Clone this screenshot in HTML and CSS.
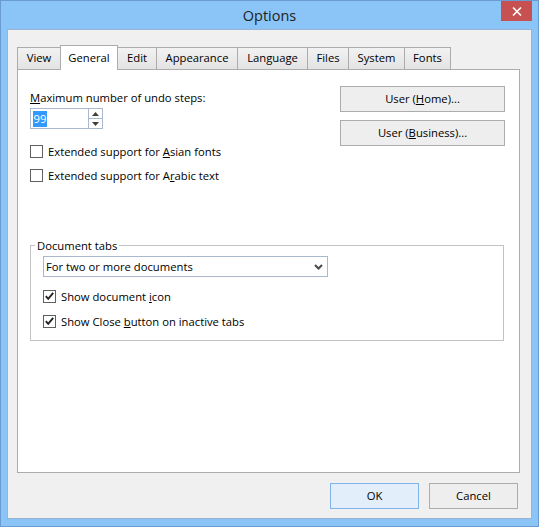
FILE: index.html
```html
<!DOCTYPE html>
<html>
<head>
<meta charset="utf-8">
<title>Options</title>
<link rel="stylesheet" href="styles.css">
</head>
<body>
<div class="window">
  <div class="titlebar">
    <span class="title">Options</span>
    <div class="close">
      <svg width="10" height="9" viewBox="0 0 10 9"><path d="M1 0.5 L9 8.5 M9 0.5 L1 8.5" stroke="#fff" stroke-width="1.6" fill="none"/></svg>
    </div>
  </div>
  <div class="client">
    <div class="tabs">
      <div class="tab t-view">View</div>
      <div class="tab t-general active">General</div>
      <div class="tab t-edit">Edit</div>
      <div class="tab t-appearance">Appearance</div>
      <div class="tab t-language">Language</div>
      <div class="tab t-files">Files</div>
      <div class="tab t-system">System</div>
      <div class="tab t-fonts">Fonts</div>
    </div>
    <div class="panel">
      <div class="top-row">
        <div class="left-col">
          <div class="label"><u>M</u>aximum number of undo steps:</div>
          <div class="spin">
            <div class="spin-text"><span class="sel">99</span></div>
            <div class="spin-btns">
              <div class="spin-btn"><svg width="7" height="4" viewBox="0 0 7 4"><path d="M0 4 L3.5 0 L7 4 Z" fill="#404040"/></svg></div>
              <div class="spin-btn lower"><svg width="7" height="4" viewBox="0 0 7 4"><path d="M0 0 L3.5 4 L7 0 Z" fill="#404040"/></svg></div>
            </div>
          </div>
          <div class="check first"><span class="box"></span><span>Extended support for <u>A</u>sian fonts</span></div>
          <div class="check second"><span class="box"></span><span>Extended support for A<u>r</u>abic text</span></div>
        </div>
        <div class="right-col">
          <div class="btn wide">User (<u>H</u>ome)...</div>
          <div class="btn wide">User (<u>B</u>usiness)...</div>
        </div>
      </div>
      <fieldset class="group">
        <legend>Document tabs</legend>
        <div class="combo">
          <span>For two or more documents</span>
          <svg width="9" height="6" viewBox="0 0 9 6"><path d="M1 1 L4.5 4.5 L8 1" stroke="#4a4a4a" stroke-width="2" fill="none"/></svg>
        </div>
        <div class="check g1"><span class="box"><svg width="11" height="11" viewBox="0 0 11 11"><path d="M1.8 5.2 L4.2 7.8 L9.2 1.8" stroke="#222" stroke-width="1.9" fill="none"/></svg></span><span>Show document <u>i</u>con</span></div>
        <div class="check g2"><span class="box"><svg width="11" height="11" viewBox="0 0 11 11"><path d="M1.8 5.2 L4.2 7.8 L9.2 1.8" stroke="#222" stroke-width="1.9" fill="none"/></svg></span><span>Show Close <u>b</u>utton on inactive tabs</span></div>
      </fieldset>
    </div>
    <div class="footer">
      <div class="btn dlg default">OK</div>
      <div class="btn dlg">Cancel</div>
    </div>
  </div>
</div>
</body>
</html>
```
FILE: styles.css
```css
* { box-sizing: border-box; }
html, body { margin: 0; padding: 0; }
body {
  font-family: "Open Sans", "Noto Sans", sans-serif;
  font-size: 11.25px;
  line-height: 15px;
  color: #000;
  background: #fff;
}
u { text-decoration: underline; text-underline-offset: 1px; }

.window {
  width: 539px;
  height: 527px;
  border: 1px solid #6a9bd2;
  background: #8bc5f7;
  padding: 0 6px 7px 6px;
  display: flex;
  flex-direction: column;
}

.titlebar {
  height: 28px;
  display: grid;
  grid-template-columns: 1fr auto 1fr;
  margin: 0 -6px;
}
.title {
  grid-column: 2;
  font-size: 14.5px;
  line-height: 28px;
  color: #222;
  padding-top: 1px;
}
.close {
  grid-column: 3;
  justify-self: end;
  align-self: start;
  width: 31px;
  height: 20px;
  margin-right: 6px;
  background: #c75050;
  display: flex;
  align-items: center;
  justify-content: center;
}

.client {
  flex: 1;
  border: 1px solid #98b4d2;
  background: #f0f0f0;
  padding: 15px 11px 0 9px;
  display: flex;
  flex-direction: column;
}

.tabs {
  display: flex;
  align-items: flex-end;
  height: 24px;
}
.tab {
  height: 22px;
  padding: 2px 0 0 0;
  text-align: center;
  border: 1px solid #acacac;
  border-bottom: none;
  margin-right: -1px;
  background: linear-gradient(#f2f2f2, #e3e3e3);
  white-space: nowrap;
  flex: none;
}
.t-view { width: 44px; }
.t-general { width: 58px; }
.t-edit { width: 40px; }
.t-appearance { width: 82px; }
.t-language { width: 71px; }
.t-files { width: 42px; }
.t-system { width: 57px; }
.t-fonts { width: 47px; }
.tab.active {
  height: 25px;
  padding-top: 4px;
  margin-bottom: -1px;
  background: #fff;
  position: relative;
  z-index: 1;
}

.panel {
  height: 404px;
  border: 1px solid #acacac;
  background: #fff;
  padding: 16px 14px 0 12px;
}
.top-row {
  display: flex;
  justify-content: space-between;
  align-items: flex-start;
}
.left-col { padding-top: 4px; }
.right-col {
  display: flex;
  flex-direction: column;
  gap: 8px;
}

.spin {
  margin-top: 3px;
  width: 73px;
  height: 21px;
  border: 1px solid #a9b8cf;
  display: flex;
}
.spin-text {
  flex: 1;
  padding-left: 2px;
  display: flex;
  align-items: center;
}
.sel {
  background: #3399ff;
  color: #fff;
  line-height: 16px;
  display: inline-block;
  padding: 0 0.5px;
}
.spin-btns {
  width: 14px;
  border-left: 1px solid #a9b8cf;
  display: flex;
  flex-direction: column;
}
.spin-btn {
  flex: 1;
  display: flex;
  align-items: center;
  justify-content: center;
}
.spin-btn.lower { border-top: 1px solid #a9b8cf; }

.check {
  display: flex;
  align-items: center;
  height: 15px;
  gap: 5px;
}
.check.first { margin-top: 15px; }
.check.second { margin-top: 9px; }
.box {
  width: 13px;
  height: 13px;
  border: 1px solid #5f5f5f;
  background: #fff;
  display: flex;
  align-items: center;
  justify-content: center;
  flex: none;
}

.btn {
  display: flex;
  align-items: center;
  justify-content: center;
  height: 26px;
  border: 1px solid #acacac;
  background: #eeeeee;
  padding-bottom: 1px;
}
.btn.wide { width: 165px; }
.btn.dlg { width: 89px; }
.btn.default {
  border-color: #7eb4ea;
  background: #e3eefb;
}

.group {
  margin: 55px 1px 0 0;
  border: 1px solid #c3c3c3;
  padding: 3px 0 11px 4px;
  min-width: 0;
}
.group legend {
  padding: 0 2px;
  line-height: 15px;
}
.group > .combo, .group > .check { margin-left: 8px; }

.combo {
  width: 285px;
  height: 21px;
  border: 1px solid #a9b8cf;
  display: flex;
  align-items: center;
  justify-content: space-between;
  padding: 0 4px 0 2px;
}
.check.g1 { margin-top: 12px; }
.check.g2 { margin-top: 10px; }

.footer {
  display: flex;
  justify-content: flex-end;
  gap: 10px;
  margin-top: 10px;
  padding-right: 2px;
}
```
